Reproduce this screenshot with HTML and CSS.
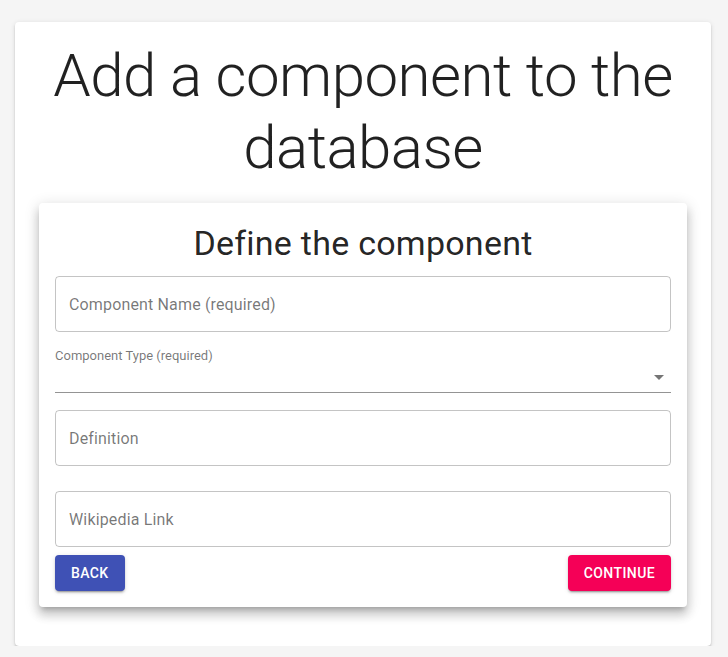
FILE: index.html
```html
<!DOCTYPE html>
<html lang="en">
<head>
<meta charset="utf-8">
<title>Add a component</title>
<link rel="stylesheet" href="styles.css">
</head>
<body>
<div class="page">
  <div class="outer-card">
    <h1 class="page-title">Add a component to the database</h1>
    <div class="inner-card">
      <h2 class="form-title">Define the component</h2>
      <div class="field field-first"><span class="placeholder">Component Name (required)</span></div>
      <div class="select">
        <div class="select-label">Component Type (required)</div>
        <div class="select-row">
          <svg class="arrow" width="24" height="24" viewBox="0 0 24 24"><path d="M7 10l5 5 5-5z" fill="rgba(0,0,0,0.54)"/></svg>
        </div>
      </div>
      <div class="field field-def"><span class="placeholder">Definition</span></div>
      <div class="field field-wiki"><span class="placeholder">Wikipedia Link</span></div>
      <div class="actions">
        <button class="btn btn-back">Back</button>
        <button class="btn btn-continue">Continue</button>
      </div>
    </div>
  </div>
</div>
</body>
</html>
```

FILE: styles.css
```css
html, body {
  margin: 0;
  padding: 0;
  background: #f5f5f5;
  font-family: Roboto, "Liberation Sans", sans-serif;
  color: rgba(0, 0, 0, 0.87);
}

.page {
  padding: 22px 17px 0 15px;
}

.outer-card {
  background: #fff;
  border-radius: 4px;
  box-shadow: 0 3px 1px -2px rgba(0,0,0,0.2), 0 2px 2px 0 rgba(0,0,0,0.14), 0 1px 5px 0 rgba(0,0,0,0.12);
  padding: 18px 24px 39px;
  height: 624px;
  box-sizing: border-box;
}

.page-title {
  margin: 0;
  font-size: 60px;
  font-weight: 300;
  line-height: 72px;
  text-align: center;
  letter-spacing: -0.55px;
}

.inner-card {
  margin-top: 19px;
  background: #fff;
  border-radius: 4px;
  box-shadow: 0 5px 5px -3px rgba(0,0,0,0.2), 0 8px 10px 1px rgba(0,0,0,0.14), 0 3px 14px 2px rgba(0,0,0,0.12);
  padding: 19px 16px 16px;
}

.form-title {
  margin: 0;
  font-size: 34px;
  font-weight: 400;
  line-height: 42px;
  text-align: center;
  letter-spacing: 0.25px;
}

.field {
  height: 56px;
  box-sizing: border-box;
  border: 1px solid rgba(0, 0, 0, 0.23);
  border-radius: 4px;
  display: flex;
  align-items: center;
  padding: 0 13px;
}

.field-first { margin-top: 12px; }
.field-def { margin-top: 17px; }
.field-wiki { margin-top: 25px; }

.placeholder {
  font-size: 16px;
  letter-spacing: 0.15px;
  color: rgba(0, 0, 0, 0.54);
}

.select {
  margin-top: 16px;
}

.select-label {
  padding-top: 1px;
  font-size: 13px;
  line-height: 13px;
  color: rgba(0, 0, 0, 0.54);
}

.select-row {
  height: 31px;
  box-sizing: border-box;
  border-bottom: 1px solid rgba(0, 0, 0, 0.42);
  display: flex;
  justify-content: flex-end;
  align-items: center;
}

.arrow {
  display: block;
}

.actions {
  margin-top: 8px;
  display: flex;
  justify-content: space-between;
}

.btn {
  height: 36px;
  border: none;
  border-radius: 4px;
  padding: 0 16px;
  font-family: Roboto, "Liberation Sans", sans-serif;
  font-size: 14px;
  font-weight: 500;
  letter-spacing: 0.4px;
  text-transform: uppercase;
  color: #fff;
  box-shadow: 0 3px 1px -2px rgba(0,0,0,0.2), 0 2px 2px 0 rgba(0,0,0,0.14), 0 1px 5px 0 rgba(0,0,0,0.12);
}

.btn-back { background: #3f51b5; }
.btn-continue { background: #f50057; }
```
